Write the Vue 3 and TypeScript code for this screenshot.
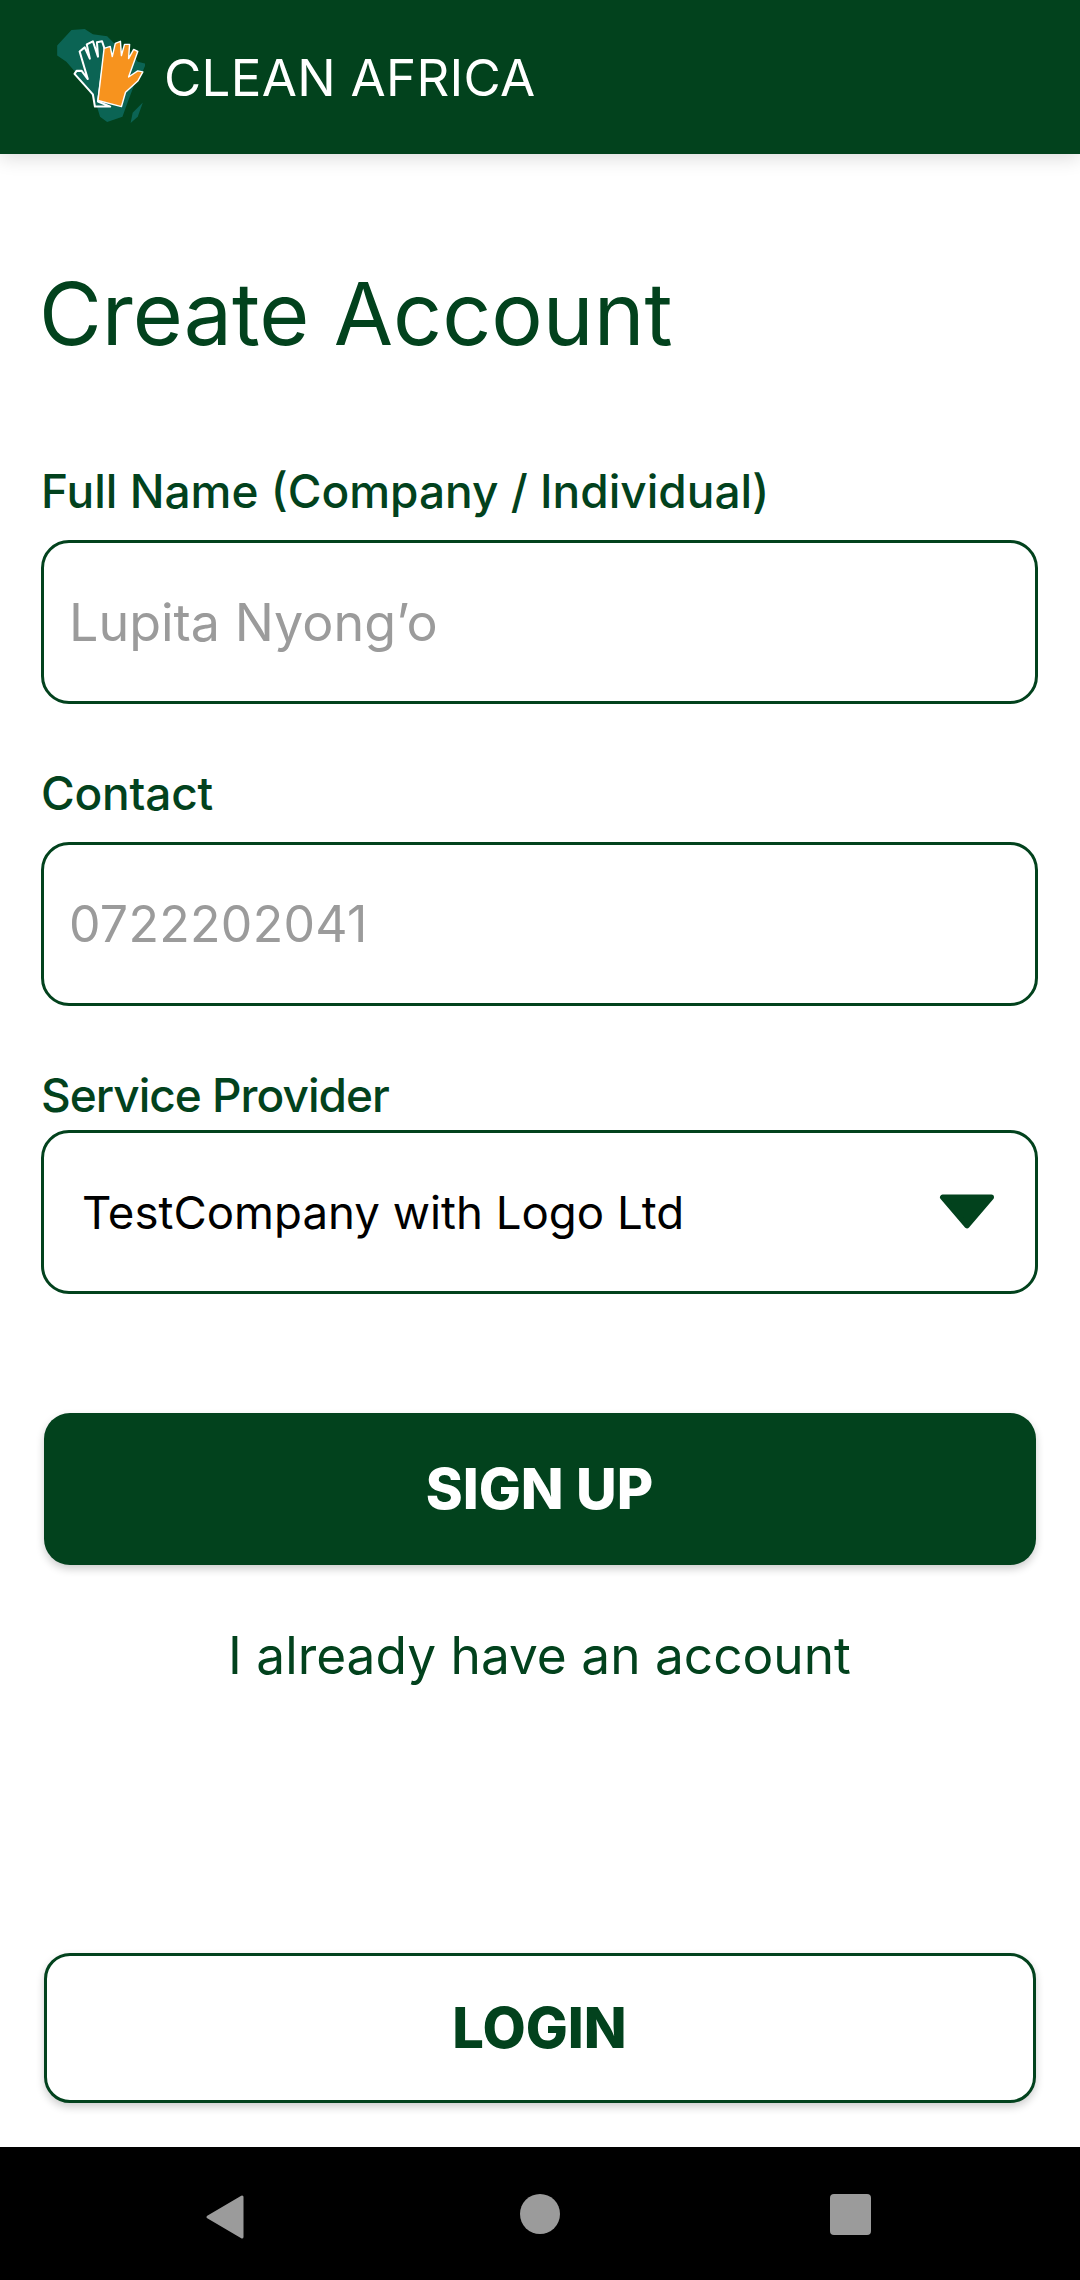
<template>
  <div class="screen">
    <header class="topbar">
      <svg class="logo" viewBox="0 0 90 100" aria-hidden="true">
        <path d="M4 19 L18 4 L31 3 L39 8 L53 10 L63 20 L76 25 L83 35 L91 37 L88 44 L79 59 L73 75 L68 89 L53 94 L46 89 L43 79 L39 70 L26 50 L13 35 L4 29 Z" fill="#0b6454" />
        <path d="M88 75 L83 89 L76 95 L78 85 Z" fill="#0b6454" />
        <path d="M41 79 L39 67 L21 47 L23 44 L28 44 L34 52 L26 25 L31 21 L36 32 L33 18 L39 15 L44 30 L43 16 L48 15 L51 24 L44 74 L56 79 Z" fill="#0b6454" stroke="#fff" stroke-width="2" stroke-linejoin="round" />
        <path d="M44 73 L50 22 L56 20 L58 30 L61 17 L66 15 L67 29 L70 18 L75 18 L74 32 L79 23 L83 25 L78 39 L74 50 L83 44 L88 45 L83 54 L71 65 L67 79 Z" fill="#f7931e" stroke="#fff" stroke-width="1.4" stroke-linejoin="round" />
      </svg>
      <span class="brand">CLEAN AFRICA</span>
    </header>

    <main class="content">
      <h1 class="title">Create Account</h1>

      <label class="label">Full Name (Company / Individual)</label>
      <div class="field"><span class="placeholder">Lupita Nyong’o</span></div>

      <label class="label contact">Contact</label>
      <div class="field"><span class="placeholder digits">0722202041</span></div>

      <label class="label provider">Service Provider</label>
      <div class="field select">
        <span class="value">TestCompany with Logo Ltd</span>
        <svg class="caret" viewBox="0 0 56 34" aria-hidden="true">
          <path d="M5 3 H51 L28 30 Z" fill="#02421d" stroke="#02421d" stroke-width="5" stroke-linejoin="round" />
        </svg>
      </div>

      <button class="btn primary" type="button">SIGN UP</button>
      <a class="link">I already have an account</a>

      <button class="btn outline" type="button">LOGIN</button>
    </main>

    <nav class="navbar">
      <svg viewBox="0 0 40 46" class="nav-icon back"><path d="M37 3 V43 L3 23 Z" fill="#9b9b9b" stroke="#9b9b9b" stroke-width="3" stroke-linejoin="round" /></svg>
      <span class="nav-icon home"></span>
      <span class="nav-icon recent"></span>
    </nav>
  </div>
</template>

<script setup lang="ts">
</script>

<style>
html, body { margin: 0; background: #fff; }
</style>

<style scoped>
.screen {
  width: 1080px;
  height: 2280px;
  display: flex;
  flex-direction: column;
  background: #fff;
  font-family: Inter, "Noto Sans", sans-serif;
  color: #02421d;
  overflow: hidden;
}

.topbar {
  height: 154px;
  flex: none;
  background: #02421d;
  display: flex;
  align-items: flex-start;
  padding-left: 53px;
  box-sizing: border-box;
  box-shadow: 0 4px 18px rgba(0, 0, 0, 0.14);
  position: relative;
}

.logo {
  width: 92px;
  height: 102px;
  margin-top: 26px;
  flex: none;
}

.brand {
  margin: 48px 0 0 19px;
  font-size: 51px;
  line-height: 60px;
  letter-spacing: 0.3px;
  color: #fff;
}

.content {
  flex: 1;
  display: flex;
  flex-direction: column;
  padding: 0 42px 0 41px;
}

.title {
  margin: 110px 0 0 -2px;
  font-size: 86px;
  line-height: 100px;
  font-weight: 400;
}

.label {
  margin-top: 101px;
  font-size: 46px;
  line-height: 52px;
  font-weight: 500;
}

.label.contact { margin-top: 63px; letter-spacing: -0.2px; }
.label.provider { margin-top: 63px; letter-spacing: -1px; }

.field {
  margin-top: 23px;
  height: 164px;
  box-sizing: border-box;
  border: 3px solid #02421d;
  border-radius: 28px;
  display: flex;
  align-items: center;
  padding: 0 25px;
  font-size: 52px;
}

.placeholder { color: #9b9b9b; }
.digits { font-size: 50px; letter-spacing: 0.3px; }

.select {
  margin-top: 9px;
  padding: 0 38px 0 38px;
  justify-content: space-between;
}

.value { color: #000; font-size: 45.6px; }

.caret { width: 60px; height: 36px; }

.btn {
  display: block;
  width: 992px;
  height: 152px;
  margin: 0 auto;
  border-radius: 26px;
  font-family: inherit;
  font-size: 56px;
  font-weight: 800;
  box-shadow: 0 4px 8px rgba(0, 0, 0, 0.2);
}

.primary {
  margin-top: 119px;
  background: #02421d;
  border: 0;
  color: #fff;
}

.link {
  margin-top: 60px;
  text-align: center;
  font-size: 51.4px;
  line-height: 60px;
}

.outline {
  margin-top: 268px;
  height: 150px;
  background: #fff;
  border: 3px solid #02421d;
  color: #02421d;
}

.navbar {
  height: 133px;
  flex: none;
  background: #000;
  position: relative;
}

.nav-icon { display: block; position: absolute; top: 47px; }
.back { left: 205px; width: 40px; height: 46px; }
.home { left: 520px; width: 40px; height: 40px; border-radius: 50%; background: #9b9b9b; }
.recent { left: 830px; width: 41px; height: 41px; border-radius: 4px; background: #9b9b9b; }
</style>
